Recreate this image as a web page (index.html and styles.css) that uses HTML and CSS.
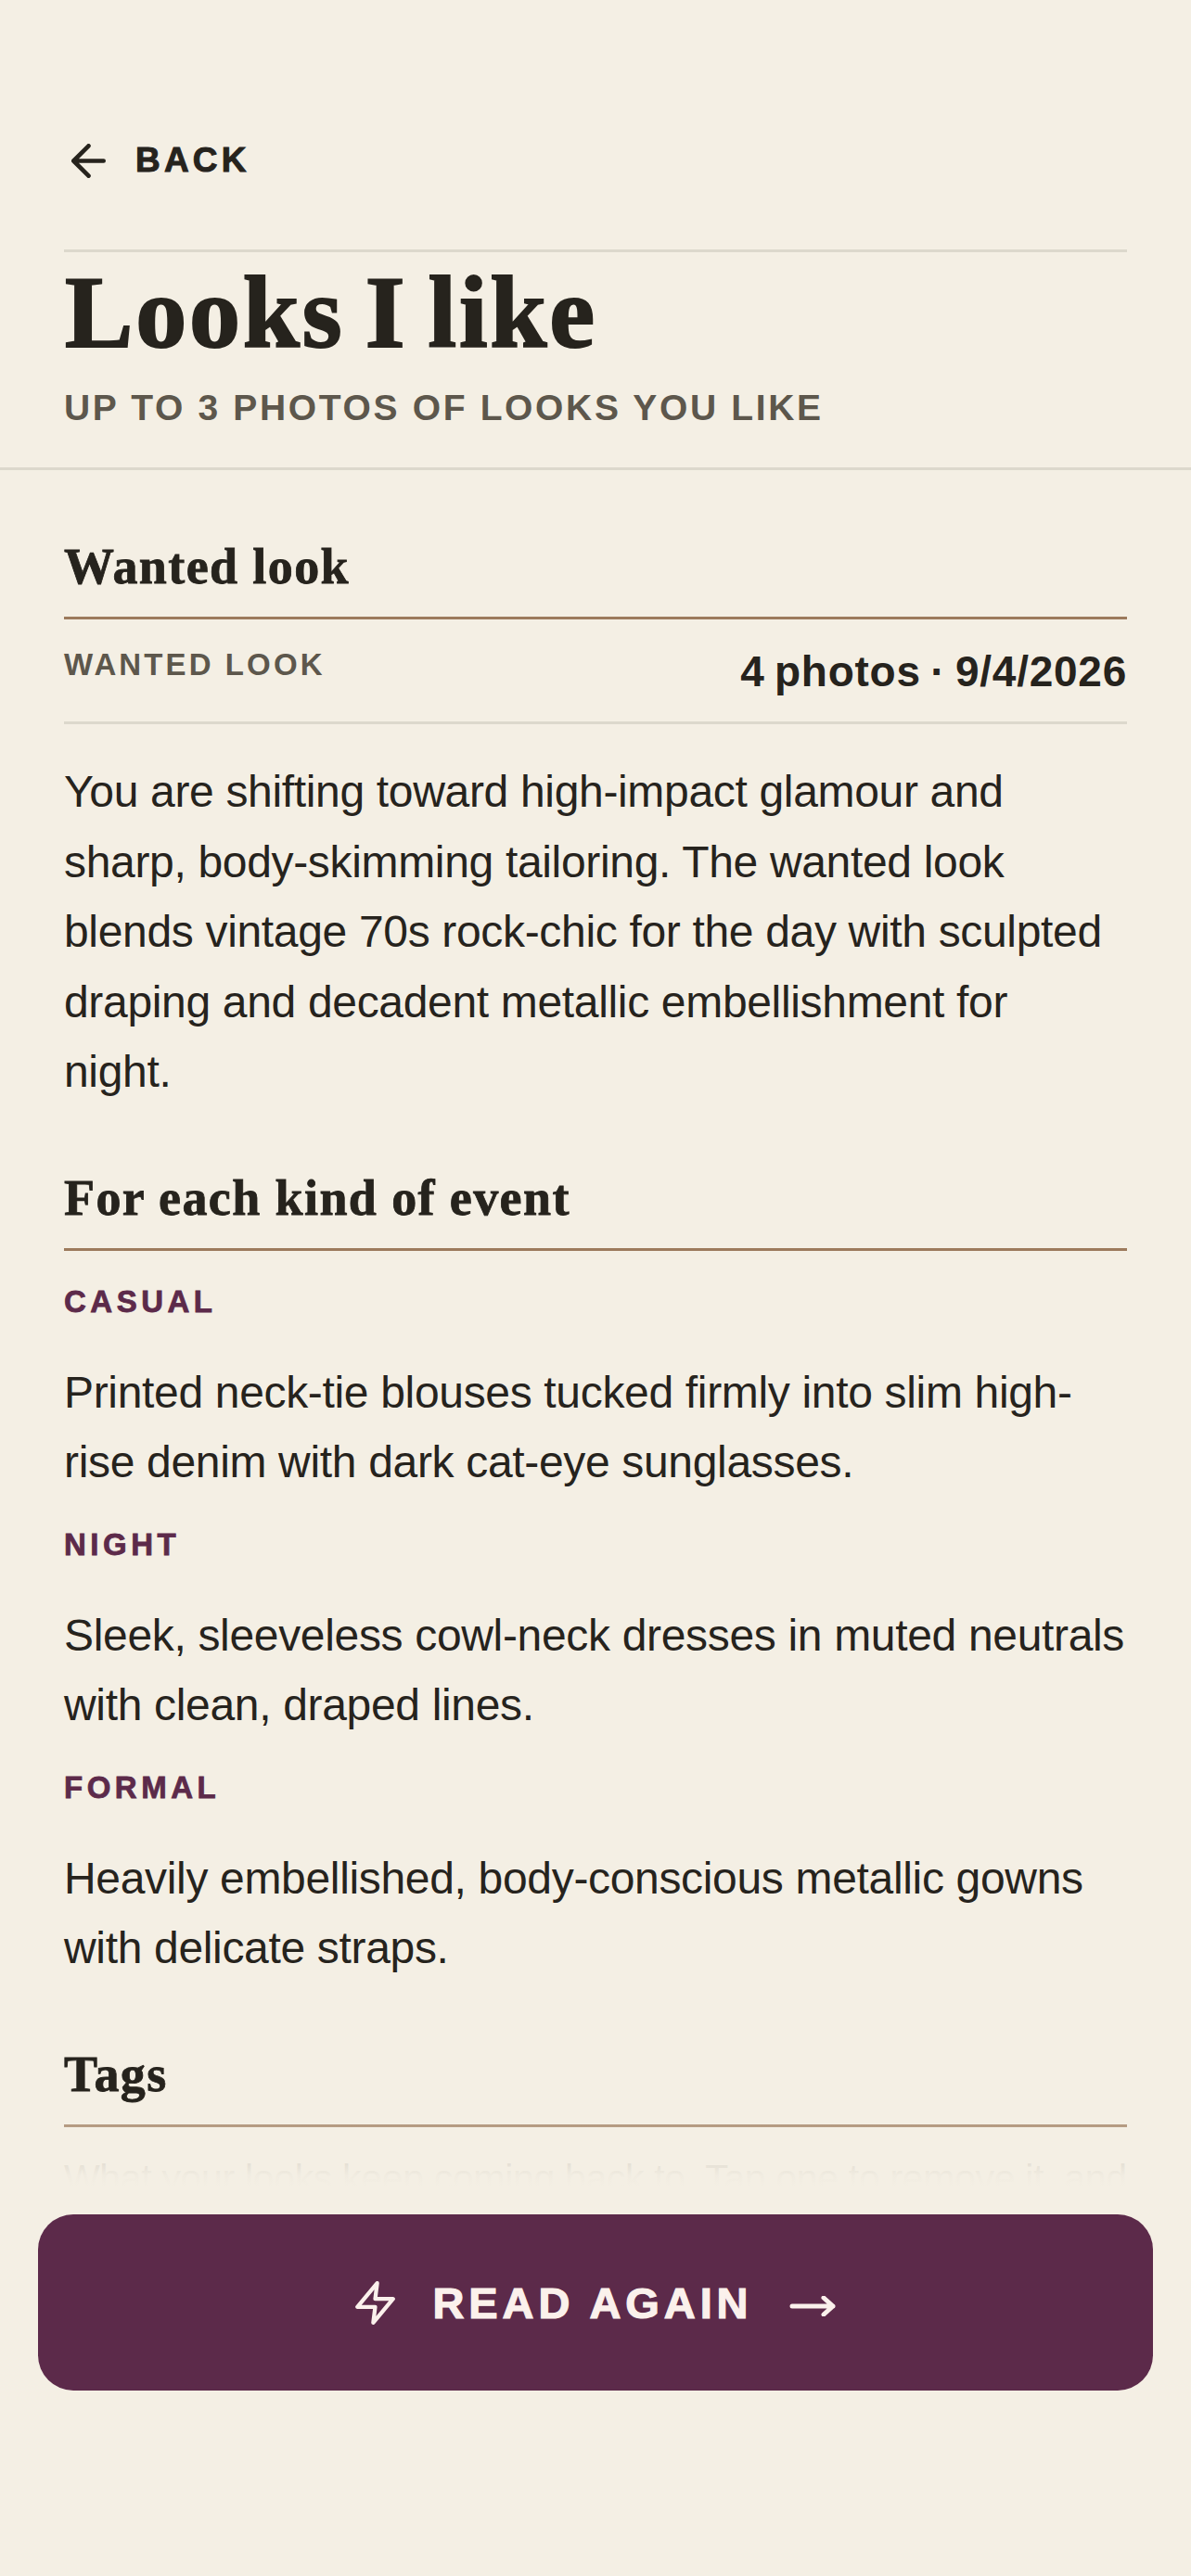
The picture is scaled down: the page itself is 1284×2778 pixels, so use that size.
FILE: index.html
```html
<!DOCTYPE html>
<html>
<head>
  <title>Looks I like</title>
  <link rel="stylesheet" href="styles.css">
</head>
<body>
  <div class="screen">
    <div class="top">
      <a class="back">
        <svg class="back-icon" viewBox="4 4 16 16"><path d="M19 12H5M12 19l-7-7 7-7"/></svg>
        <span>BACK</span>
      </a>
      <div class="top-rule"></div>
      <h1>Looks I like</h1>
      <div class="subtitle">UP TO 3 PHOTOS OF LOOKS YOU LIKE</div>
    </div>

    <div class="content">
      <h2>Wanted look</h2>
      <div class="meta">
        <span class="meta-label">WANTED LOOK</span>
        <span class="meta-value">4 photos · 9/4/2026</span>
      </div>
      <p>You are shifting toward high-impact glamour and sharp, body-skimming tailoring. The wanted look blends vintage 70s rock-chic for the day with sculpted draping and decadent metallic embellishment for<br>night.</p>

      <h2 class="next">For each kind of event</h2>
      <div class="kind">CASUAL</div>
      <p>Printed neck-tie blouses tucked firmly into slim high-rise denim with dark cat-eye sunglasses.</p>
      <div class="kind">NIGHT</div>
      <p>Sleek, sleeveless cowl-neck dresses in muted neutrals with clean, draped lines.</p>
      <div class="kind">FORMAL</div>
      <p>Heavily embellished, body-conscious metallic gowns with delicate straps.</p>

      <h2 class="next">Tags</h2>
      <p class="tags-text">What your looks keep coming back to. Tap one to remove it, and add your own.</p>
    </div>

    <div class="fade"></div>
    <div class="bottom">
      <button class="read-btn">
        <svg class="bolt" viewBox="2 1 20 22"><path d="M13 2L3 14h9l-1 8 10-12h-9l1-8z"/></svg>
        <span>READ AGAIN</span>
        <svg class="arrow" viewBox="0 0 50 22"><path d="M3 11h44M37 2l10 9-10 9"/></svg>
      </button>
    </div>
  </div>
</body>
</html>
```

FILE: styles.css
```css
* {
  box-sizing: border-box;
}
html, body {
  margin: 0;
  padding: 0;
}
body {
  background: #f4efe4;
  color: #26231d;
  font-family: "Liberation Sans", Arial, sans-serif;
}
.screen {
  position: relative;
  width: 1284px;
  height: 2778px;
  overflow: hidden;
}

/* header */
.top {
  padding: 147px 69px 0;
  height: 507px;
  border-bottom: 3px solid #dcd8cc;
}
.back {
  display: flex;
  align-items: center;
  gap: 32px;
  height: 52px;
  padding-left: 8px;
  font-size: 37px;
  font-weight: 700;
  letter-spacing: 4.2px;
  -webkit-text-stroke: 1px #26231d;
}
.back-icon {
  width: 37px;
  height: 37px;
  fill: none;
  stroke: #26231d;
  stroke-width: 2;
  stroke-linecap: round;
  stroke-linejoin: round;
}
.top-rule {
  height: 3px;
  margin-top: 70px;
  background: #dcd8cc;
}
h1 {
  margin: 0;
  padding-left: 1px;
  font-family: "Liberation Serif", "Times New Roman", serif;
  font-size: 110px;
  font-weight: 700;
  line-height: 130px;
  letter-spacing: 2.8px;
  word-spacing: -8px;
  -webkit-text-stroke: 2px #26231d;
}
.subtitle {
  margin-top: 13px;
  font-size: 39px;
  font-weight: 700;
  letter-spacing: 2.65px;
  line-height: 50px;
  color: #5d574c;
}

/* body sections */
.content {
  padding: 0 69px;
}
h2 {
  margin: 0;
  padding: 74px 0 24px;
  font-family: "Liberation Serif", "Times New Roman", serif;
  font-size: 54px;
  font-weight: 700;
  line-height: 60px;
  letter-spacing: 1.4px;
  -webkit-text-stroke: 0.8px #26231d;
  border-bottom: 3px solid #9c7a5c;
}
h2.next {
  padding-top: 0;
  margin-top: 68px;
}
.meta {
  display: flex;
  justify-content: space-between;
  height: 113px;
  padding-top: 29px;
  border-bottom: 3px solid #dcd8cc;
}
.meta-label {
  font-size: 33px;
  font-weight: 700;
  letter-spacing: 3.1px;
  line-height: 40px;
  color: #5d574c;
}
.meta-value {
  margin-top: 2px;
  font-size: 46px;
  font-weight: 700;
  line-height: 50px;
  letter-spacing: 0.75px;
  word-spacing: -3px;
}
p {
  margin: 35px 0 0;
  font-size: 48px;
  line-height: 75.5px;
  letter-spacing: -0.33px;
}
.kind {
  margin-top: 31px;
  font-size: 33px;
  font-weight: 700;
  letter-spacing: 4.5px;
  line-height: 40px;
  color: #5c2a4a;
  -webkit-text-stroke: 0.8px #5c2a4a;
}
h2 + .kind {
  margin-top: 35px;
}
.kind + p {
  margin-top: 40px;
}
.tags-text {
  margin-top: 18px;
  font-size: 41px;
  color: #a8a398;
}

/* bottom bar lies over the scrolling text */
.fade {
  position: absolute;
  left: 0;
  right: 0;
  top: 2270px;
  height: 76px;
  background: linear-gradient(to bottom, rgba(244, 239, 228, 0), rgba(244, 239, 228, 0.96));
}
.bottom {
  position: absolute;
  left: 0;
  right: 0;
  top: 2346px;
  bottom: 0;
  padding: 42px 41px 0;
  background: linear-gradient(to bottom, rgba(244, 239, 228, 0.96), #f4efe4 12px);
}
.read-btn {
  display: flex;
  align-items: center;
  justify-content: center;
  width: 100%;
  height: 190px;
  border: 0;
  border-radius: 38px;
  background: #5c2a4a;
  color: #fbf1ec;
  font-family: "Liberation Sans", Arial, sans-serif;
  font-size: 47px;
  font-weight: 700;
  letter-spacing: 4.9px;
  -webkit-text-stroke: 1.2px #fbf1ec;
}
.bolt {
  width: 43px;
  height: 47px;
  margin-right: 41px;
  fill: none;
  stroke: #fbf1ec;
  stroke-width: 2;
  stroke-linejoin: round;
  stroke-linecap: round;
}
.arrow {
  width: 50px;
  height: 22px;
  margin-left: 40px;
  margin-top: 8px;
  fill: none;
  stroke: #fbf1ec;
  stroke-width: 5;
  stroke-linecap: round;
  stroke-linejoin: round;
}
```
